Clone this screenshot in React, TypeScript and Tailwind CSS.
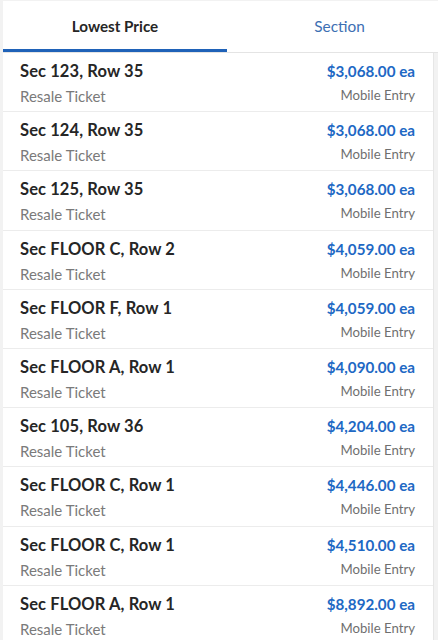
import React from "react";

const rows = [
  ["Sec 123, Row 35", "$3,068.00"],
  ["Sec 124, Row 35", "$3,068.00"],
  ["Sec 125, Row 35", "$3,068.00"],
  ["Sec FLOOR C, Row 2", "$4,059.00"],
  ["Sec FLOOR F, Row 1", "$4,059.00"],
  ["Sec FLOOR A, Row 1", "$4,090.00"],
  ["Sec 105, Row 36", "$4,204.00"],
  ["Sec FLOOR C, Row 1", "$4,446.00"],
  ["Sec FLOOR C, Row 1", "$4,510.00"],
  ["Sec FLOOR A, Row 1", "$8,892.00"],
];

export default function App() {
  return (
    <div
      className="w-[438px] h-[640px] overflow-hidden bg-[#f2f2f2] pl-[3px] pt-[1px]"
      style={{ fontFamily: "Lato, 'Noto Sans', sans-serif" }}
    >
      <div className="flex h-[52px] bg-white border-b border-[#e4e4e4]">
        <div className="w-[224px] flex flex-col">
          <div className="flex-1 flex items-center justify-center text-[15.2px] font-bold text-[#262626] pt-[3px]">
            Lowest Price
          </div>
          <div className="h-[3px] bg-[#1f62b8]" />
        </div>
        <div className="flex-1 flex flex-col">
          <div className="flex-1 flex items-center justify-center text-[15.4px] text-[#3d6fb3] pt-[3px] pl-[14px]">
            Section
          </div>
          <div className="h-[3px]" />
        </div>
      </div>
      <div className="mr-[4px] bg-white border-r border-[#e6e6e6]">
        {rows.map(([sec, price], i) => (
          <div
            key={i}
            className="h-[59.2px] flex justify-between border-b border-[#ececec] pl-[17px] pr-[18px] pt-[7px]"
          >
            <div className="flex flex-col">
              <div className="text-[16.5px] font-bold text-[#262626] leading-[22px] tracking-[0.1px]">
                {sec}
              </div>
              <div className="text-[15px] text-[#7a7a7a] leading-[20px] mt-[4px]">
                Resale Ticket
              </div>
            </div>
            <div className="flex flex-col items-end">
              <div className="text-[15.2px] font-bold text-[#2068c4] leading-[22px]">
                {price} ea
              </div>
              <div className="text-[13.2px] text-[#6f6f6f] leading-[20px] mt-[3px]">
                Mobile Entry
              </div>
            </div>
          </div>
        ))}
      </div>
    </div>
  );
}
